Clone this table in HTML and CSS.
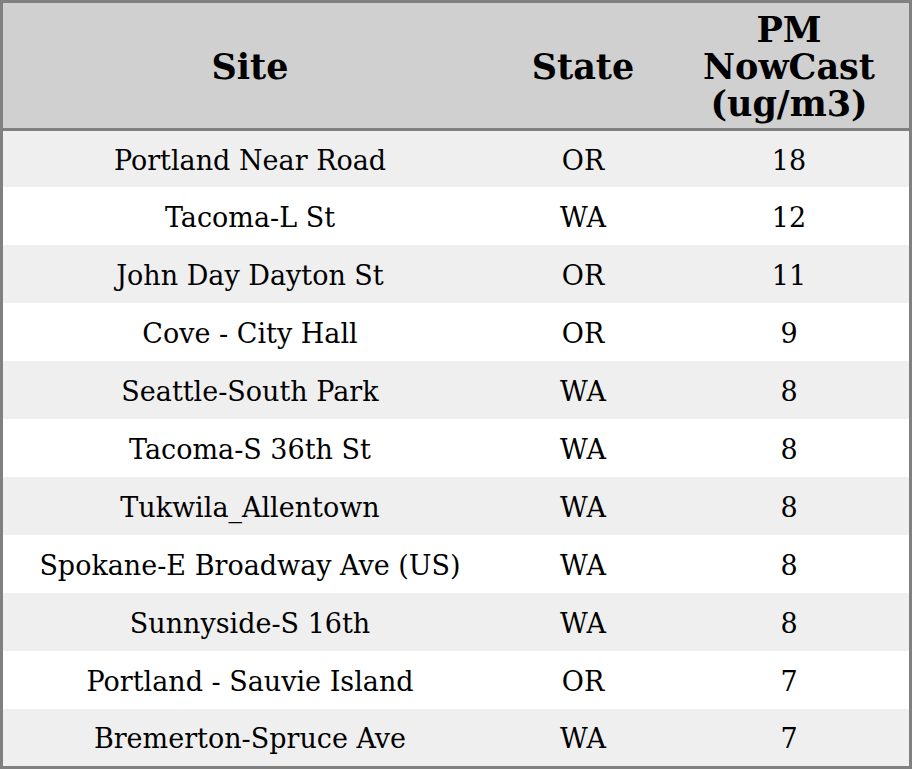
FILE: index.html
```html
<!DOCTYPE html>
<html>
<head>
<meta charset="utf-8">
<link rel="stylesheet" href="styles.css">
</head>
<body>
<table class="aq">
  <thead>
    <tr>
      <th class="c-site">Site</th>
      <th class="c-state">State</th>
      <th class="c-pm">PM<br>NowCast<br>(ug/m3)</th>
    </tr>
  </thead>
  <tbody>
    <tr class="first"><td>Portland Near Road</td><td>OR</td><td>18</td></tr>
    <tr><td>Tacoma-L St</td><td>WA</td><td>12</td></tr>
    <tr><td>John Day Dayton St</td><td>OR</td><td>11</td></tr>
    <tr><td>Cove - City Hall</td><td>OR</td><td>9</td></tr>
    <tr><td>Seattle-South Park</td><td>WA</td><td>8</td></tr>
    <tr><td>Tacoma-S 36th St</td><td>WA</td><td>8</td></tr>
    <tr><td>Tukwila_Allentown</td><td>WA</td><td>8</td></tr>
    <tr><td>Spokane-E Broadway Ave (US)</td><td>WA</td><td>8</td></tr>
    <tr><td>Sunnyside-S 16th</td><td>WA</td><td>8</td></tr>
    <tr><td>Portland - Sauvie Island</td><td>OR</td><td>7</td></tr>
    <tr class="last"><td>Bremerton-Spruce Ave</td><td>WA</td><td>7</td></tr>
  </tbody>
</table>
</body>
</html>
```
FILE: styles.css
```css
html, body {
  margin: 0;
  padding: 0;
  background: #ffffff;
}
.aq {
  width: 912px;
  border-collapse: separate;
  border-spacing: 0;
  border: 3px solid #808080;
  font-family: "DejaVu Serif", serif;
  color: #000;
  table-layout: fixed;
}
.aq th, .aq td {
  box-sizing: border-box;
  padding: 0;
  text-align: center;
  vertical-align: middle;
}
.aq th {
  background: #d0d0d0;
  height: 128px;
  font-size: 35px;
  font-weight: bold;
  line-height: 37px;
  border-bottom: 3px solid #808080;
  padding-top: 2px;
}
.c-site { width: 494px; }
.c-state { width: 172px; }
.c-pm { width: 240px; }
.aq td {
  font-size: 27px;
  height: 58px;
  line-height: 30px;
  padding-top: 3px;
}
.aq tbody tr:nth-child(odd) td {
  background: #efefef;
}
.aq tbody tr.first td { height: 56px; }
.aq tbody tr.last td { height: 57px; }
```
